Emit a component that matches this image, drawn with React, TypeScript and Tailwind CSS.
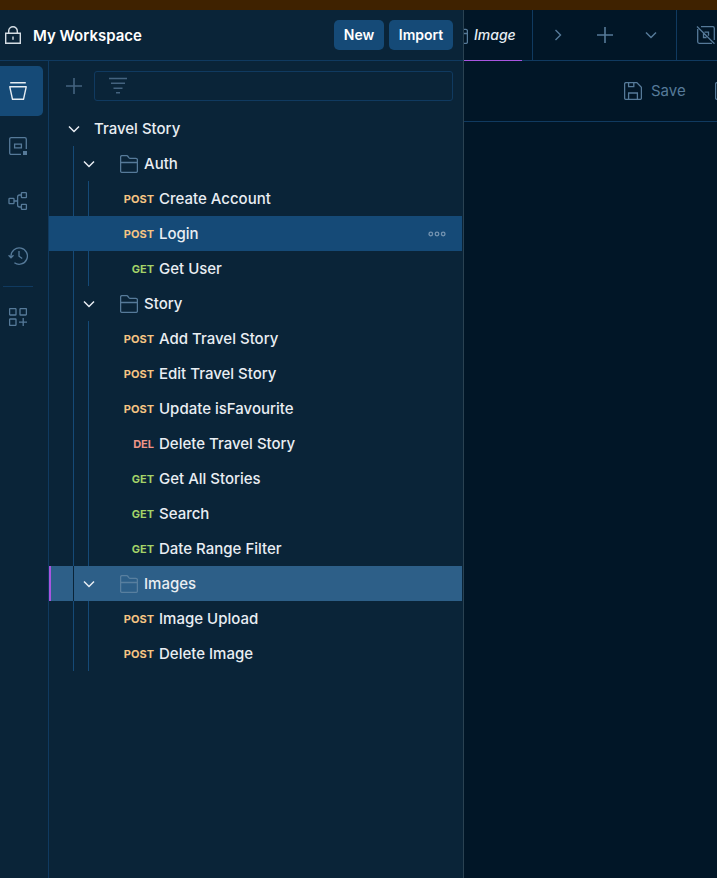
import type { ReactNode } from "react";

type Method = "POST" | "GET" | "DEL";
type Request = { method: Method; name: string };
type Folder = { name: string; requests: Request[] };

const collection: { name: string; folders: Folder[] } = {
  name: "Travel Story",
  folders: [
    {
      name: "Auth",
      requests: [
        { method: "POST", name: "Create Account" },
        { method: "POST", name: "Login" },
        { method: "GET", name: "Get User" },
      ],
    },
    {
      name: "Story",
      requests: [
        { method: "POST", name: "Add Travel Story" },
        { method: "POST", name: "Edit Travel Story" },
        { method: "POST", name: "Update isFavourite" },
        { method: "DEL", name: "Delete Travel Story" },
        { method: "GET", name: "Get All Stories" },
        { method: "GET", name: "Search" },
        { method: "GET", name: "Date Range Filter" },
      ],
    },
    {
      name: "Images",
      requests: [
        { method: "POST", name: "Image Upload" },
        { method: "POST", name: "Delete Image" },
      ],
    },
  ],
};

const hovered = "Login";
const selected = "Images";

const methodColor: Record<Method, string> = {
  POST: "text-[#f6c583]",
  GET: "text-[#a3d368]",
  DEL: "text-[#ef9488]",
};

function Icon({ size, className = "", children }: { size: number; className?: string; children: ReactNode }) {
  return (
    <svg
      width={size}
      height={size}
      viewBox={`0 0 ${size} ${size}`}
      fill="none"
      stroke="currentColor"
      strokeWidth="1.3"
      className={`shrink-0 ${className}`}
      aria-hidden="true"
    >
      {children}
    </svg>
  );
}

const ChevronDown = ({ className = "" }: { className?: string }) => (
  <Icon size={16} className={className}>
    <path d="M3 5.5l5 5 5-5" strokeWidth="1.5" />
  </Icon>
);

const ChevronRight = () => (
  <Icon size={16}>
    <path d="M5.5 3l5 5-5 5" strokeWidth="1.4" />
  </Icon>
);

const Plus = () => (
  <Icon size={16}>
    <path d="M8 0v16M0 8h16" strokeWidth="1.6" />
  </Icon>
);

const FolderIcon = ({ className = "" }: { className?: string }) => (
  <Icon size={18} className={className}>
    <path d="M.6 7.5V2.1Q.6.6 2.1.6h4.6q.5 0 .9.4L9 2.9q.4.4.9.4h6q1.5 0 1.5 1.5v11.1q0 1.5-1.5 1.5H2.1q-1.5 0-1.5-1.5zh16.8" />
  </Icon>
);

const LockIcon = () => (
  <Icon size={18} className="text-[#d5dde4]">
    <path d="M1.7 7.2h14.6v10H1.7zM4.7 7.2V5a4.3 4.3 0 018.6 0v2.2M9 10.5v3.2" strokeWidth="1.4" />
  </Icon>
);

const CollectionIcon = () => (
  <Icon size={18}>
    <path d="M1.2.7h15.6M.8 4.8h16.4l-2.7 12.5H3.5z" strokeWidth="1.4" strokeLinejoin="round" />
  </Icon>
);

const EnvironmentIcon = () => (
  <Icon size={18}>
    <path d="M12 17.3H2.2Q.7 17.3.7 15.8V2.2Q.7.7 2.2.7h13.6q1.5 0 1.5 1.5V12M5.6 7.2h6.8v3.6H5.6z" />
    <path d="M14 14h4v4h-4z" fill="currentColor" stroke="none" />
  </Icon>
);

const FlowIcon = () => (
  <Icon size={20}>
    <rect x="1" y="7.4" width="5" height="5.2" rx=".6" />
    <rect x="13.4" y="1.6" width="5" height="5" rx=".6" />
    <rect x="13.4" y="13.4" width="5" height="5" rx=".6" />
    <path d="M6 10h3.6M13.4 4h-1.8q-2 0-2 2v8q0 2 2 2h1.8" />
  </Icon>
);

const HistoryIcon = () => (
  <Icon size={20}>
    <path d="M3 11.5V10a8.2 8.2 0 11 3.4 6.7M.6 9.2L3 11.8l2.5-2.6M11 5v5.2l3.2 2.4" />
  </Icon>
);

const AppsIcon = () => (
  <Icon size={18}>
    <rect x=".6" y=".6" width="6.4" height="6.4" rx=".6" />
    <rect x="11" y=".6" width="6.4" height="6.4" rx=".6" />
    <rect x=".6" y="11" width="6.4" height="6.4" rx=".6" />
    <path d="M14.2 10v8M10 14.2h8" />
  </Icon>
);

const FilterIcon = () => (
  <Icon size={18} className="text-[#44637f]">
    <path d="M0 1.5h18M2 6.2h14M4.5 11.2h9M7 15.8h4" strokeWidth="1.5" />
  </Icon>
);

const NoEnvironmentIcon = () => (
  <Icon size={20}>
    <path d="M5 1.7h11.8q1.5 0 1.5 1.5V15M1.7 4v12.8q0 1.5 1.5 1.5H16M1 1.5l17.5 17.3M8.5 7.2h4v3.6M10.5 12.5h-3v-4" />
  </Icon>
);

const SaveIcon = () => (
  <Icon size={18}>
    <path d="M2.1.6h10.7l4.6 4.6v10.7q0 1.5-1.5 1.5H2.1q-1.5 0-1.5-1.5V2.1Q.6.6 2.1.6zM4.6.6v4.1h5.2V.6M4.6 17.4v-6.4h8.8v6.4" />
  </Icon>
);

const MoreIcon = () => (
  <Icon size={18}>
    <circle cx="2.8" cy="9" r="1.8" />
    <circle cx="9" cy="9" r="1.8" />
    <circle cx="15.2" cy="9" r="1.8" />
  </Icon>
);

function FolderRow({ folder }: { folder: Folder }) {
  const active = folder.name === selected;
  return (
    <button
      type="button"
      aria-expanded="true"
      className={`flex h-[35px] w-full items-center border-l-2 pt-px text-left ${
        active ? "border-[#a855e0] bg-[#2d5f88]" : "border-transparent"
      }`}
    >
      <span
        className={`-mt-px ml-[22px] w-2 self-stretch border-l ${active ? "border-[#0a2438]" : "border-[#154a77]"}`}
      />
      <ChevronDown />
      <FolderIcon className={`ml-[23px] mr-1.5 ${active ? "text-[#587f9f]" : "text-[#567a99]"}`} />
      {folder.name}
    </button>
  );
}

function RequestRow({ request }: { request: Request }) {
  const active = request.name === hovered;
  const guide = active ? "border-transparent" : "border-[#154a77]";
  return (
    <div className={`flex h-[35px] items-center pl-6 pt-px ${active ? "bg-[#154a77]" : ""}`}>
      <span className={`-mt-px w-[15px] self-stretch border-l ${guide}`} />
      <span className={`-mt-px w-[15px] self-stretch border-l ${guide}`} />
      <button type="button" className="flex flex-1 items-center text-left">
        <span className={`mr-[5px] w-[51px] text-right text-[11px] font-bold ${methodColor[request.method]}`}>
          {request.method}
        </span>
        {request.name}
      </button>
      {active && (
        <button type="button" aria-label="More actions" className="mr-4 text-[#7393b0]">
          <MoreIcon />
        </button>
      )}
    </div>
  );
}

function Rail() {
  const item = "flex h-[55px] w-9 items-center justify-center";
  return (
    <nav aria-label="Workspace" className="w-[49px] shrink-0 border-r border-[#103a60] pt-[5px] text-[#567a99]">
      <button
        type="button"
        aria-label="Collections"
        className="flex h-[50px] w-[43px] items-center rounded-r-[5px] bg-[#154a77] pl-[9px] text-[#e6edf3]"
      >
        <CollectionIcon />
      </button>
      <button type="button" aria-label="Environments" className={`${item} mt-0.5`}>
        <EnvironmentIcon />
      </button>
      <button type="button" aria-label="Flows" className={item}>
        <FlowIcon />
      </button>
      <button type="button" aria-label="History" className={item}>
        <HistoryIcon />
      </button>
      <hr className="ml-[3px] mt-[3px] w-[30px] border-[#103a60]" />
      <button type="button" aria-label="Configure sidebar" className={`${item} mt-0.5`}>
        <AppsIcon />
      </button>
    </nav>
  );
}

function Sidebar() {
  return (
    <aside className="flex w-[464px] shrink-0 flex-col border-r border-[#2a4252] bg-[#0a2438]">
      <header className="flex h-[51px] shrink-0 items-center border-b border-[#103a60] pl-1 pr-2.5 text-white">
        <LockIcon />
        <h1 className="ml-[11px] flex-1 pt-0.5 text-[15px] font-semibold">My Workspace</h1>
        <button type="button" className="mr-[5px] h-[30px] w-[50px] rounded-[5px] bg-[#154a77] text-sm font-semibold">
          New
        </button>
        <button type="button" className="h-[30px] w-16 rounded-[5px] bg-[#154a77] text-sm font-semibold">
          Import
        </button>
      </header>
      <div className="flex min-h-0 flex-1">
        <Rail />
        <div className="min-w-0 flex-1 pr-px font-medium">
          <div className="flex h-[50px] items-center pl-[17px] pr-[9px] text-[#44637f]">
            <button type="button" aria-label="Create new">
              <Plus />
            </button>
            <label className="ml-3 flex h-[30px] flex-1 items-center rounded-[3px] border border-[#103a60] pl-3.5">
              <FilterIcon />
              <input type="text" aria-label="Filter collections" className="ml-2 min-w-0 flex-1 bg-transparent outline-none" />
            </label>
          </div>
          <button
            type="button"
            aria-expanded="true"
            className="flex h-[35px] w-full items-center gap-3 pl-[17px] pt-px text-left"
          >
            <ChevronDown />
            {collection.name}
          </button>
          <ul>
            {collection.folders.map((folder) => (
              <li key={folder.name}>
                <FolderRow folder={folder} />
                <ul>
                  {folder.requests.map((request) => (
                    <li key={request.name}>
                      <RequestRow request={request} />
                    </li>
                  ))}
                </ul>
              </li>
            ))}
          </ul>
        </div>
      </div>
    </aside>
  );
}

function Editor() {
  return (
    <main className="min-w-0 flex-1 overflow-hidden text-[#567a99]">
      <div className="flex h-[51px]">
        <div className="flex w-[58px] shrink-0 items-center overflow-hidden border-b border-[#a855e0]">
          <FolderIcon className="-ml-3.5 mr-1.5" />
          <button type="button" className="shrink-0 text-left text-sm font-medium italic text-[#e6edf3]">
            Image
          </button>
        </div>
        <div className="flex flex-1 border-b border-[#103a60]">
          <div className="ml-2.5 flex w-[145px] shrink-0 items-center justify-between border-x border-[#103a60] px-[17px]">
            <button type="button" aria-label="Scroll tabs right">
              <ChevronRight />
            </button>
            <button type="button" aria-label="New tab">
              <Plus />
            </button>
            <button type="button" aria-label="Tab options">
              <ChevronDown />
            </button>
          </div>
          <button type="button" aria-label="No environment" className="pl-[19px]">
            <NoEnvironmentIcon />
          </button>
        </div>
      </div>
      <div className="flex h-[61px] items-center border-b border-[#103a60] pl-40">
        <button type="button" className="flex shrink-0 items-center gap-[9px] text-[15px]">
          <SaveIcon />
          Save
        </button>
        <button type="button" aria-label="Share" className="ml-[29px] shrink-0">
          <Icon size={18}>
            <rect x=".6" y=".6" width="16.8" height="16.8" rx="1.5" />
          </Icon>
        </button>
      </div>
    </main>
  );
}

export default function App() {
  return (
    <div className="flex h-screen flex-col overflow-hidden bg-[#011627] font-['Inter','Liberation_Sans',sans-serif] text-[15px] leading-6 font-normal text-[#e9eef3]">
      <div className="h-2.5 shrink-0 bg-[#3f2200]" />
      <div className="flex min-h-0 flex-1">
        <Sidebar />
        <Editor />
      </div>
    </div>
  );
}
